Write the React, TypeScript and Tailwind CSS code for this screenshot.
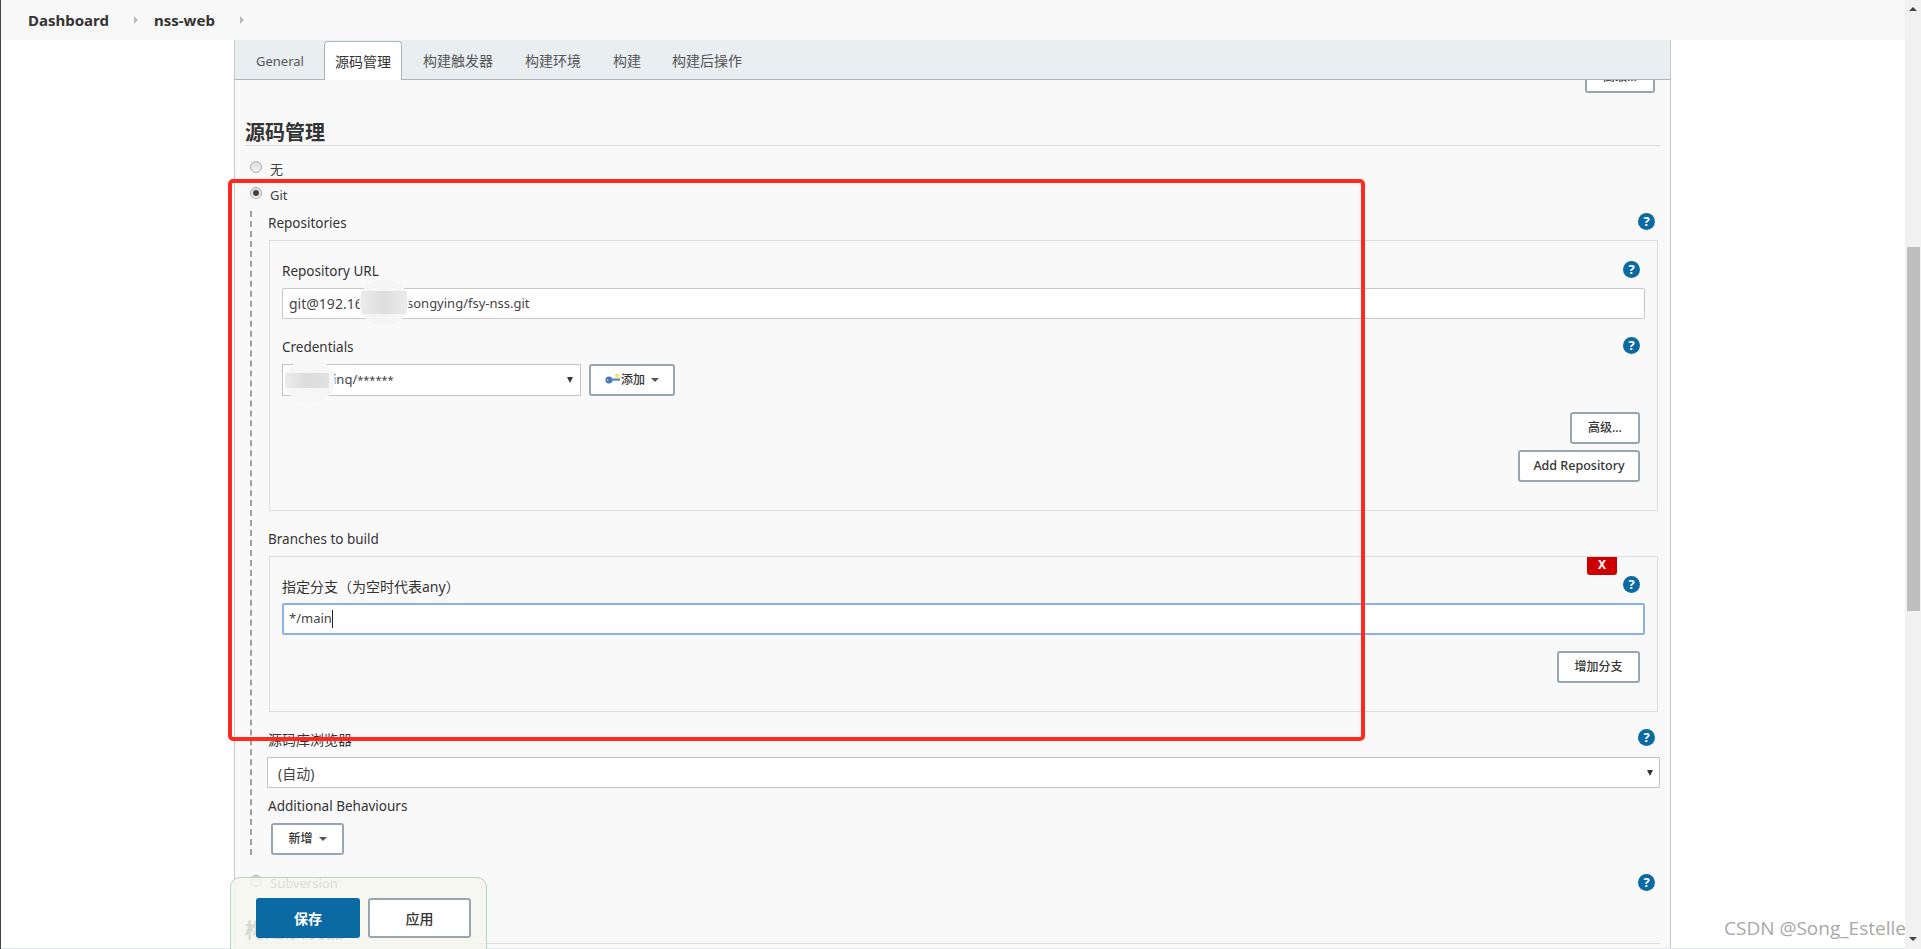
import React from 'react';

const sans = 'font-["Noto_Sans","Noto_Sans_CJK_SC",sans-serif]';

function Help() {
  return (
    <div className="w-[17px] h-[17px] -translate-y-px rounded-full bg-[#0b6aa2] text-white text-[13px] font-bold leading-[17px] text-center shrink-0">?</div>
  );
}

function Caret() {
  return <div className="w-0 h-0 border-x-[4px] border-x-transparent border-t-[4px] border-t-[#555]" />;
}

function Btn({ w, latin, children }: { w: string; latin?: boolean; children: React.ReactNode }) {
  return (
    <div className={`${w} h-8 shrink-0 rounded-[3px] border-2 border-[#98a6b0] bg-white flex items-center justify-center font-medium text-[#333] ${latin ? 'text-[12.5px]' : 'text-[12px]'}`}>
      {children}
    </div>
  );
}

function Label({ text, mr, cjk, className }: { text: string; mr?: string; cjk?: boolean; className?: string }) {
  return (
    <div className={`h-[22px] flex items-center justify-between ${className ?? ''}`}>
      <span className={`translate-y-px text-[#333] ${cjk ? 'text-[14px]' : 'text-[13.5px]'}`}>{text}</span>
      {mr && <div className={mr}><Help /></div>}
    </div>
  );
}

function Radio({ checked }: { checked?: boolean }) {
  return (
    <div className="w-[12px] h-[12px] rounded-full border border-[#aaa] bg-gradient-to-b from-[#ddd] to-[#f2f2f2] flex items-center justify-center -translate-y-[2px] shrink-0">
      {checked && <div className="w-[6px] h-[6px] rounded-full bg-[#444]" />}
    </div>
  );
}

function RadioRow({ text, checked, className }: { text: string; checked?: boolean; className?: string }) {
  return (
    <div className={`h-[26px] flex items-center gap-[8px] pl-[15px] ${className ?? ''}`}>
      <Radio checked={checked} />
      <span className="translate-y-px text-[13px] text-[#444]">{text}</span>
    </div>
  );
}

function KeyIcon() {
  return (
    <svg width="15" height="14" viewBox="0 0 15 14" className="shrink-0">
      <circle cx="12" cy="2.5" r="2" fill="#f5e94a" />
      <circle cx="4" cy="7" r="3.6" fill="#4a78b5" />
      <rect x="6" y="5.4" width="9" height="2.4" fill="#5c8ac2" />
      <circle cx="2.6" cy="7" r="0.8" fill="#cfe0f2" />
    </svg>
  );
}

function App() {
  return (
    <div className={`relative h-screen overflow-hidden bg-white border-l border-l-[#444] flex ${sans}`}>
      <div className="flex-1 min-w-0 flex flex-col">
        <div className="h-10 shrink-0 bg-[#f8f8f8] flex items-center text-[15px] font-bold text-[#333]">
          <span className="ml-[27px] w-[106px]">Dashboard</span>
          <div className="w-0 h-0 border-y-[4px] border-y-transparent border-l-[4px] border-l-[#bbb]" />
          <span className="ml-[16px] w-[86px]">nss-web</span>
          <div className="w-0 h-0 border-y-[4px] border-y-transparent border-l-[4px] border-l-[#bbb]" />
        </div>

        <div className="flex-1 min-h-0 flex overflow-hidden">
          <div className="w-[233px] shrink-0" />
          <div className="w-[1437px] shrink-0 border-x border-x-[#c8c8c8] bg-[#f9f9f9] flex flex-col">
            {/* tab bar */}
            <div className="h-10 shrink-0 bg-[#e9eef1] border-b border-b-[#aab4bb] flex items-end gap-[11px] pl-[11px] text-[14px] text-[#555]">
              <div className="h-[38px] w-[67px] px-[10px] flex items-center text-[13px]"><span className="translate-y-[2px]">General</span></div>
              <div className="h-[39px] -mb-px px-[10px] flex items-center bg-white border border-[#aab4bb] border-b-0 rounded-t-[4px] text-[#333]">源码管理</div>
              <div className="h-[38px] px-[10px] flex items-center">构建触发器</div>
              <div className="h-[38px] ml-px px-[10px] flex items-center">构建环境</div>
              <div className="h-[38px] ml-px px-[10px] flex items-center">构建</div>
              <div className="h-[38px] px-[10px] flex items-center">构建后操作</div>
            </div>

            {/* rest of previous section, scrolled away */}
            <div className="h-[13px] shrink-0 overflow-hidden flex items-end justify-end pr-[15px]">
              <Btn w="w-[70px]">高级...</Btn>
            </div>

            <div className="h-[53px] shrink-0 mx-[10px] border-b border-b-[#ddd] flex items-end text-[20px] leading-[24px] font-bold text-[#333]">源码管理</div>

            <RadioRow text="无" className="mt-[10px]" />
            <RadioRow text="Git" checked />

            <div className="ml-[15px] mt-[3px] h-[644px] shrink-0 border-l-2 border-dashed border-l-[#a0a0a0] pl-[16px] pr-[10px]">
              <Label text="Repositories" mr="mr-[5px]" className="mb-[7px]" />
              <div className="ml-px mr-[2px] border border-[#ddd] px-[12px] pt-[18px] pb-[28px]">
                <Label text="Repository URL" mr="mr-[5px]" className="mb-[7px]" />
                <div className="relative h-[31px] rounded-[2px] border border-[#c8c8c8] bg-white flex items-center pl-[6px] text-[13px] text-[#444]">
                  <span className="w-[118px] text-[14px]">git@192.16</span>
                  <span>songying/fsy-nss.git</span>
                  <div className="absolute left-[76px] -top-[9px] w-[50px] h-[45px] rounded-full bg-[#f5f5f5] flex items-center justify-center">
                    <div className="w-[46px] h-[23px] bg-gradient-to-r from-[#ebebeb] via-[#dedede] to-[#ebebeb]" />
                  </div>
                </div>

                <Label text="Credentials" mr="mr-[5px]" className="mt-[16px] mb-[7px]" />
                <div className="flex gap-[8px]">
                  <div className="relative w-[299px] h-8 border border-[#c4c4c4] bg-white flex items-center pl-[50px] text-[13px] text-[#444]">
                    <span>inq/</span>
                    <span className="text-[11px]">******</span>
                    <div className="absolute right-[7px] top-[12px] w-0 h-0 border-x-[3px] border-x-transparent border-t-[6px] border-t-[#333]" />
                    <div className="absolute left-[2px] -top-[5px] w-[50px] h-[42px] rounded-full bg-[#f6f6f6] pt-[13px]">
                      <div className="w-[44px] h-[15px] bg-gradient-to-r from-[#ececec] via-[#dcdcdc] to-[#e2e2e2]" />
                    </div>
                  </div>
                  <Btn w="w-[86px]">
                    <KeyIcon />
                    <span className="ml-px">添加</span>
                    <span className="ml-[6px]"><Caret /></span>
                  </Btn>
                </div>

                <div className="mt-[16px] mr-[5px] flex flex-col items-end gap-[6px]">
                  <Btn w="w-[70px]">高级...</Btn>
                  <Btn w="w-[122px]" latin>Add Repository</Btn>
                </div>
              </div>

              <Label text="Branches to build" className="mt-[16px] mb-[7px]" />
              <div className="relative ml-px mr-[2px] border border-[#ddd] px-[12px] pt-[17px] pb-[28px]">
                <div className="absolute right-[40px] top-0 w-[30px] h-[18px] bg-[#cc0000] rounded-b-[3px] text-white text-[12px] font-bold leading-[16px] text-center">X</div>
                <Label text="指定分支（为空时代表any）" mr="mr-[5px]" cjk className="mb-[7px]" />
                <div className="h-8 rounded-[2px] border-2 border-[#8ab0ee] bg-white flex items-center pl-[5px] text-[13px] text-[#444]">
                  <span>*/main</span>
                  <div className="w-px h-[18px] bg-[#222]" />
                </div>
                <div className="mt-[16px] mr-[5px] flex justify-end">
                  <Btn w="w-[83px]">增加分支</Btn>
                </div>
              </div>

              <Label text="源码库浏览器" mr="mr-[5px]" cjk className="mt-[15px] mb-[8px]" />
              <div className="relative -ml-px h-[31px] border border-[#c4c4c4] bg-white flex items-center pl-[10px] text-[14px] text-[#444]">
                <span className="translate-y-px">(自动)</span>
                <div className="absolute right-[6px] top-[12px] w-0 h-0 border-x-[3px] border-x-transparent border-t-[6px] border-t-[#333]" />
              </div>

              <Label text="Additional Behaviours" className="mt-[6px] mb-[7px]" />
              <div className="ml-[3px]">
                <Btn w="w-[73px]">
                  <span>新增</span>
                  <span className="ml-[6px]"><Caret /></span>
                </Btn>
              </div>
            </div>

            <div className="mt-[15px] flex items-center justify-between pr-[15px]">
              <RadioRow text="Subversion" />
              <Help />
            </div>

            <div className="h-[48px] shrink-0 mx-[10px] border-b border-b-[#ddd] flex items-end text-[20px] leading-[24px] font-bold text-[#333]">构建触发器</div>
          </div>
        </div>
        <div className="h-px shrink-0 bg-[#dfe7ef]" />
      </div>

      {/* scrollbar */}
      <div className="w-4 shrink-0 bg-[#f1f1f1] relative">
        <div className="absolute left-[2px] right-px top-[247px] h-[364px] bg-[#bdbdbd]" />
        <div className="absolute left-[4px] top-[7px] w-0 h-0 border-x-[4px] border-x-transparent border-b-[4px] border-b-[#444]" />
        <div className="absolute left-[4px] bottom-[8px] w-0 h-0 border-x-[4px] border-x-transparent border-t-[4px] border-t-[#444]" />
      </div>

      {/* sticky save bar */}
      <div className="absolute left-[229px] top-[877px] w-[257px] h-[80px] rounded-t-[10px] border border-[#b5d6bf] bg-[#f5f7ee]/85 flex gap-[8px] pl-[25px] pt-[20px]">
        <div className="w-[104px] h-10 rounded-[3px] bg-[#0b6aa2] text-white text-[14px] font-bold flex items-center justify-center">保存</div>
        <div className="w-[103px] h-10 rounded-[3px] border-2 border-[#98a6b0] bg-white text-[#333] text-[14px] font-medium flex items-center justify-center">应用</div>
      </div>

      {/* red annotation */}
      <div className="absolute left-[227px] top-[179px] w-[1137px] h-[562px] rounded-[5px] border-[4px] border-[#ff2a1f]" />

      {/* watermark */}
      <div className='absolute left-[1723px] top-[914px] text-[19px] leading-[28px] text-[#a8a8a8] font-["Open_Sans",sans-serif]'>CSDN @Song_Estelle</div>
    </div>
  );
}

export default App;
